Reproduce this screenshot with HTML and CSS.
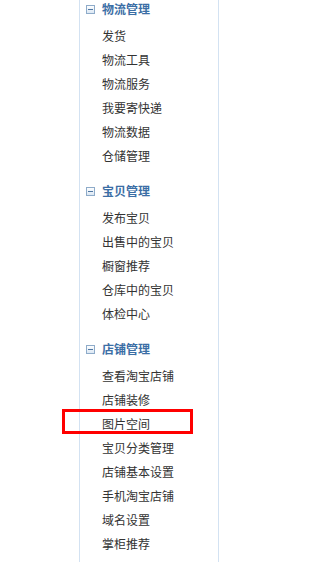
FILE: index.html
```html
<!DOCTYPE html>
<html lang="zh-CN">
<head>
<meta charset="utf-8">
<title>卖家中心</title>
<link rel="stylesheet" href="styles.css">
</head>
<body>
<div class="sidebar">
  <div class="group">
    <div class="group-title"><svg class="toggle" width="9" height="9" viewBox="0 0 9 9"><defs><linearGradient id="g1" x1="0" y1="0" x2="0" y2="1"><stop offset="0" stop-color="#ffffff"/><stop offset="1" stop-color="#d9e6f3"/></linearGradient></defs><rect x="0.5" y="0.5" width="8" height="8" fill="url(#g1)" stroke="#8eabc9"/><rect x="2" y="4" width="5" height="1" fill="#4f77a3"/></svg>物流管理</div>
    <ul class="items">
      <li>发货</li>
      <li>物流工具</li>
      <li>物流服务</li>
      <li>我要寄快递</li>
      <li>物流数据</li>
      <li>仓储管理</li>
    </ul>
  </div>
  <div class="group">
    <div class="group-title"><svg class="toggle" width="9" height="9" viewBox="0 0 9 9"><rect x="0.5" y="0.5" width="8" height="8" fill="url(#g1)" stroke="#8eabc9"/><rect x="2" y="4" width="5" height="1" fill="#4f77a3"/></svg>宝贝管理</div>
    <ul class="items">
      <li>发布宝贝</li>
      <li>出售中的宝贝</li>
      <li>橱窗推荐</li>
      <li>仓库中的宝贝</li>
      <li>体检中心</li>
    </ul>
  </div>
  <div class="group">
    <div class="group-title"><svg class="toggle" width="9" height="9" viewBox="0 0 9 9"><rect x="0.5" y="0.5" width="8" height="8" fill="url(#g1)" stroke="#8eabc9"/><rect x="2" y="4" width="5" height="1" fill="#4f77a3"/></svg>店铺管理</div>
    <ul class="items">
      <li>查看淘宝店铺</li>
      <li>店铺装修</li>
      <li class="highlighted">图片空间<span class="mark"></span></li>
      <li>宝贝分类管理</li>
      <li>店铺基本设置</li>
      <li>手机淘宝店铺</li>
      <li>域名设置</li>
      <li>掌柜推荐</li>
    </ul>
  </div>
</div>
</body>
</html>
```

FILE: styles.css
```css
html, body {
  margin: 0;
  padding: 0;
  background: #ffffff;
}

body {
  font-family: "Noto Sans CJK SC", "Liberation Sans", sans-serif;
  font-size: 12px;
  width: 226px;
  height: 562px;
  overflow: hidden;
}

.sidebar {
  margin-left: 79px;
  width: 138px;
  height: 562px;
  border-left: 1px solid #d3e2f2;
  border-right: 1px solid #d3e2f2;
}

.group {
  margin-bottom: 14px;
}

.group-title {
  display: flex;
  align-items: center;
  gap: 7px;
  padding-left: 6px;
  height: 18px;
  line-height: 18px;
  font-weight: bold;
  color: #3b6ea5;
  margin-bottom: 6px;
}

.toggle {
  display: block;
  flex: none;
}

.items {
  list-style: none;
  margin: 0;
  padding: 0 0 0 22px;
}

.items li {
  height: 24px;
  line-height: 24px;
  color: #333333;
  white-space: nowrap;
}

.highlighted {
  position: relative;
}

.mark {
  position: absolute;
  left: -40px;
  top: -3px;
  width: 125px;
  height: 19px;
  border: 3px solid #ff0000;
}
```
